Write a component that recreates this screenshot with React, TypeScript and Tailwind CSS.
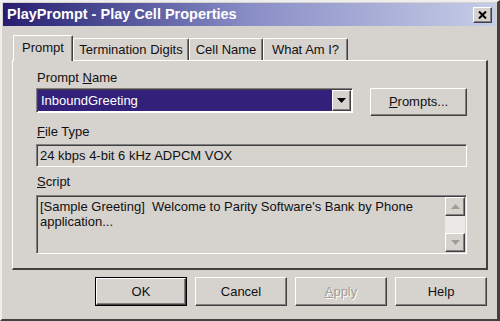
import React from "react";

const raised =
  "border-t border-l border-t-white border-l-white border-r border-b border-r-[#404040] border-b-[#404040] shadow-[inset_-1px_-1px_0_#808080]";
const sunken =
  "border-t border-l border-t-[#808080] border-l-[#808080] border-r border-b border-r-white border-b-white shadow-[inset_1px_1px_0_#404040]";

function Tab({ label, selected, className = "" }: { label: string; selected?: boolean; className?: string }) {
  if (selected) {
    return (
      <div
        className={`relative z-10 -mb-[1px] flex h-[26px] items-center justify-center rounded-t-[2px] border-t border-l border-t-white border-l-white border-r border-r-[#404040] bg-[#d6d2ce] shadow-[inset_-1px_0_0_#808080] ${className}`}
      >
        <span className="-mt-[2px]">{label}</span>
      </div>
    );
  }
  return (
    <div
      className={`flex h-[22px] items-center justify-center rounded-t-[2px] border-t border-l border-t-white border-l-white border-r border-r-[#404040] shadow-[inset_-1px_0_0_#808080] ${className}`}
    >
      {label}
    </div>
  );
}

function Button({
  children,
  primary,
  disabled,
  className = "",
}: {
  children: React.ReactNode;
  primary?: boolean;
  disabled?: boolean;
  className?: string;
}) {
  const inner = (
    <div
      className={`flex h-full w-full items-center justify-center ${raised} ${
        disabled ? "text-[#a09c98] [text-shadow:1px_1px_0_#ffffff]" : ""
      }`}
    >
      {children}
    </div>
  );
  if (primary) {
    return <div className={`border border-black ${className}`}>{inner}</div>;
  }
  return <div className={className}>{inner}</div>;
}

function Arrow({ up, color }: { up?: boolean; color: string }) {
  return (
    <svg width="9" height="5" viewBox="0 0 9 5">
      <path d={up ? "M0 5 L4.5 0 L9 5 Z" : "M0 0 L9 0 L4.5 5 Z"} fill={color} />
    </svg>
  );
}

export default function App() {
  return (
    <div
      className="h-[321px] w-[500px] overflow-hidden bg-[#d6d2ce] text-[13px] text-[#111] border-t-2 border-l-2 border-t-[#eeeeee] border-l-[#eeeeee] border-r-[3px] border-b-2 border-r-[#404040] border-b-[#404040] p-[1px]"
      style={{ fontFamily: '"Liberation Sans", Arial, sans-serif' }}
    >
      {/* title bar */}
      <div className="flex h-[23px] items-center justify-between bg-gradient-to-r from-[#281c70] via-[#8a8ec6] to-[#c6cde6] pl-[4px] pr-[4px]">
        <span className="text-[14.5px] font-bold text-white">
          PlayPrompt - Play Cell Properties
        </span>
        <div className={`flex h-[16px] w-[19px] items-center justify-center bg-[#d6d2ce] ${raised}`}>
          <svg width="9" height="8" viewBox="0 0 9 8">
            <path d="M1 0.5 L8 7.5 M8 0.5 L1 7.5" stroke="#000" strokeWidth="2" />
          </svg>
        </div>
      </div>

      {/* tabs */}
      <div className="mt-[9px] ml-[10px] flex items-end">
        <Tab label="Prompt" selected className="w-[60px]" />
        <Tab label="Termination Digits" className="w-[116px]" />
        <Tab label="Cell Name" className="w-[74px]" />
        <Tab label="What Am I?" className="w-[85px]" />
      </div>

      {/* panel */}
      <div className="ml-[9px] flex h-[210px] w-[476px] flex-col border-t border-l border-t-white border-l-white border-r-2 border-b-2 border-r-[#404040] border-b-[#404040] pl-[23px] pr-[18px]">
        <div className="mt-[9px] ml-[1px] leading-[16px]">
          Prompt <span className="underline">N</span>ame
        </div>
        <div className="mt-[2px] flex items-start">
          <div className={`flex h-[25px] w-[317px] items-stretch p-[1px] ${sunken} bg-white`}>
            <div className="flex flex-1 items-center bg-[#33207a] pl-[3px] text-white">
              InboundGreeting
            </div>
            <div className={`flex w-[19px] items-center justify-center bg-[#d6d2ce] ${raised}`}>
              <Arrow color="#000" />
            </div>
          </div>
          <Button className="ml-[17px] h-[28px] w-[97px]">
            <span>
              <span className="underline">P</span>rompts...
            </span>
          </Button>
        </div>

        <div className="mt-[8px] ml-[1px] leading-[16px]">
          <span className="underline">F</span>ile Type
        </div>
        <div className={`mt-[4px] flex h-[23px] w-[431px] items-center pl-[3px] ${sunken}`}>
          24 kbps 4-bit 6 kHz ADPCM VOX
        </div>

        <div className="mt-[7px] ml-[1px] leading-[16px]">
          <span className="underline">S</span>cript
        </div>
        <div className={`mt-[5px] flex h-[59px] w-[431px] ${sunken}`}>
          <div className="flex-1 pl-[3px] pt-[3px] leading-[15px]">
            [Sample Greeting]&nbsp; Welcome to Parity Software's Bank by Phone
            <br />
            application...
          </div>
          <div className="mr-[1px] mt-[1px] mb-[1px] flex w-[20px] flex-col">
            <div className={`flex h-[19px] items-center justify-center ${raised}`}>
              <Arrow up color="#a09c98" />
            </div>
            <div className="flex-1 bg-[#ebe9e6]" />
            <div className={`flex h-[19px] items-center justify-center ${raised}`}>
              <Arrow color="#a09c98" />
            </div>
          </div>
        </div>
      </div>

      {/* buttons */}
      <div className="mt-[7px] flex justify-end gap-[8px] pr-[9px]">
        <Button primary className="h-[29px] w-[92px]">
          OK
        </Button>
        <Button className="h-[29px] w-[92px]">Cancel</Button>
        <Button disabled className="h-[29px] w-[92px]">
          <span>
            <span className="underline">A</span>pply
          </span>
        </Button>
        <Button className="h-[29px] w-[92px]">Help</Button>
      </div>
    </div>
  );
}
